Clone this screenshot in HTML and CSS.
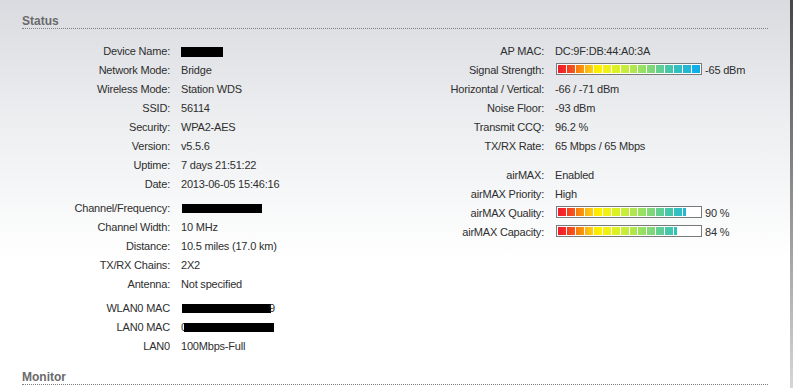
FILE: index.html
```html
<!DOCTYPE html>
<html>
<head>
    <meta charset="utf-8">
    <title>Status</title>
<link rel="stylesheet" href="styles.css">
</head>
<body>
<div class="page">
    <div class="main">
        <h2 class="section-title">Status</h2>

        <div class="status">
            <div class="col left">
                <div class="group">
                    <div class="row"><span class="label">Device Name:</span><span class="value"><span class="redact dev"></span></span></div>
                    <div class="row"><span class="label">Network Mode:</span><span class="value">Bridge</span></div>
                    <div class="row"><span class="label">Wireless Mode:</span><span class="value">Station WDS</span></div>
                    <div class="row"><span class="label">SSID:</span><span class="value">56114</span></div>
                    <div class="row"><span class="label">Security:</span><span class="value">WPA2-AES</span></div>
                    <div class="row"><span class="label">Version:</span><span class="value">v5.5.6</span></div>
                    <div class="row"><span class="label">Uptime:</span><span class="value">7 days 21:51:22</span></div>
                    <div class="row"><span class="label">Date:</span><span class="value">2013-06-05 15:46:16</span></div>
                </div>
                <div class="group">
                    <div class="row"><span class="label">Channel/Frequency:</span><span class="value"><span class="redact chan"></span></span></div>
                    <div class="row"><span class="label">Channel Width:</span><span class="value">10 MHz</span></div>
                    <div class="row"><span class="label">Distance:</span><span class="value">10.5 miles (17.0 km)</span></div>
                    <div class="row"><span class="label">TX/RX Chains:</span><span class="value">2X2</span></div>
                    <div class="row"><span class="label">Antenna:</span><span class="value">Not specified</span></div>
                </div>
                <div class="group">
                    <div class="row"><span class="label">WLAN0 MAC</span><span class="value"><span class="redact wlan"></span><span class="peek">9</span></span></div>
                    <div class="row"><span class="label">LAN0 MAC</span><span class="value">0<span class="redact lan"></span></span></div>
                    <div class="row"><span class="label">LAN0</span><span class="value">100Mbps-Full</span></div>
                </div>
            </div>

            <div class="col right">
                <div class="group">
                    <div class="row"><span class="label">AP MAC:</span><span class="value">DC:9F:DB:44:A0:3A</span></div>
                    <div class="row"><span class="label">Signal Strength:</span>
                        <span class="value meter-wrap">
                            <span class="meter"><span class="meter-fill" style="width:100%"><span class="segs"><i></i><i></i><i></i><i></i><i></i><i></i><i></i><i></i><i></i><i></i><i></i><i></i><i></i><i></i><i></i><i></i></span></span></span>
                            <span>-65 dBm</span>
                        </span>
                    </div>
                    <div class="row"><span class="label">Horizontal / Vertical:</span><span class="value">-66 / -71 dBm</span></div>
                    <div class="row"><span class="label">Noise Floor:</span><span class="value">-93 dBm</span></div>
                    <div class="row"><span class="label">Transmit CCQ:</span><span class="value">96.2 %</span></div>
                    <div class="row"><span class="label">TX/RX Rate:</span><span class="value">65 Mbps / 65 Mbps</span></div>
                </div>
                <div class="group">
                    <div class="row"><span class="label">airMAX:</span><span class="value">Enabled</span></div>
                    <div class="row"><span class="label">airMAX Priority:</span><span class="value">High</span></div>
                    <div class="row"><span class="label">airMAX Quality:</span>
                        <span class="value meter-wrap">
                            <span class="meter"><span class="meter-fill" style="width:90%"><span class="segs"><i></i><i></i><i></i><i></i><i></i><i></i><i></i><i></i><i></i><i></i><i></i><i></i><i></i><i></i><i></i><i></i></span></span></span>
                            <span>90 %</span>
                        </span>
                    </div>
                    <div class="row"><span class="label">airMAX Capacity:</span>
                        <span class="value meter-wrap">
                            <span class="meter"><span class="meter-fill" style="width:84%"><span class="segs"><i></i><i></i><i></i><i></i><i></i><i></i><i></i><i></i><i></i><i></i><i></i><i></i><i></i><i></i><i></i><i></i></span></span></span>
                            <span>84 %</span>
                        </span>
                    </div>
                </div>
            </div>
        </div>

        <h2 class="section-title monitor">Monitor</h2>
    </div>
    <div class="edge"></div>
</div>
</body>
</html>
```

FILE: styles.css
```css
*
{
  margin: 0;
  padding: 0;
  box-sizing: content-box;
}

html, body
{
  height: 100%;
}

body
{
  font-family: "Liberation Sans", Arial, sans-serif;
  font-size: 11px;
  letter-spacing: -0.2px;
  color: #2e2e2e;
  overflow: hidden;
  background: linear-gradient(to bottom, #d9dbe0 0px, #eceef0 120px, #ffffff 260px);
}

div.page
{
  display: flex;
  height: 388px;
}

div.main
{
  flex: 1;
}

div.edge
{
  width: 3px;
  background: linear-gradient(to bottom, #464646, #d6d6d6);
}

/* section headings with dotted rule */
h2.section-title
{
  margin: 14px 22px 0 22px;
  font-size: 12px;
  font-weight: bold;
  line-height: 14px;
  letter-spacing: 0;
  color: #6a6a6a;
  border-bottom: 1px dotted #808080;
}

h2.monitor
{
  margin-top: 15px;
}

div.status
{
  display: flex;
  padding-top: 12px;
}

div.left
{
  width: 378px;
  padding-left: 22px;
}

div.right
{
  flex: 1;
}

div.left .group + .group
{
  margin-top: 5px;
}

div.right .group + .group
{
  margin-top: 10px;
}

div.row
{
  display: grid;
  grid-template-columns: 148px auto;
  column-gap: 11px;
  height: 19px;
  align-items: center;
  white-space: nowrap;
}

div.right .row
{
  grid-template-columns: 144px auto;
}

span.label
{
  text-align: right;
}

/* blacked out values */
span.redact
{
  display: inline-block;
  background: #000;
  vertical-align: middle;
}

span.dev
{
  width: 42px;
  height: 10px;
  margin-top: 2px;
}

span.chan
{
  width: 80px;
  height: 9px;
  margin-left: 1px;
}

span.wlan
{
  width: 89px;
  height: 9px;
  margin-left: 1px;
}

span.peek
{
  margin-left: -2px;
}

span.lan
{
  width: 90px;
  height: 9px;
  margin-left: -3px;
}

/* signal meters */
span.meter-wrap
{
  display: flex;
  align-items: center;
  gap: 3px;
}

span.meter
{
  display: block;
  width: 142px;
  height: 8px;
  padding: 1px;
  margin: -2px 0 0 1px;
  border: 1px solid #7a7a7a;
  background: #fff;
}

span.meter-fill
{
  display: block;
  height: 8px;
  overflow: hidden;
}

span.segs
{
  display: flex;
  gap: 1px;
  width: 142px;
  height: 8px;
}

span.segs i
{
  flex: 1;
  height: 8px;
}

span.segs i:nth-child(1)  { background: linear-gradient(to right, #ee1c2c, #f52e26); }
span.segs i:nth-child(2)  { background: linear-gradient(to right, #f43c20, #f85a18); }
span.segs i:nth-child(3)  { background: linear-gradient(to right, #f9780e, #fb9a0c); }
span.segs i:nth-child(4)  { background: linear-gradient(to right, #fcb412, #fdd00a); }
span.segs i:nth-child(5)  { background: linear-gradient(to right, #fee800, #fff200); }
span.segs i:nth-child(6)  { background: linear-gradient(to right, #f4f010, #eef018); }
span.segs i:nth-child(7)  { background: linear-gradient(to right, #e2f020, #d8f028); }
span.segs i:nth-child(8)  { background: linear-gradient(to right, #ccee34, #c2ec3c); }
span.segs i:nth-child(9)  { background: linear-gradient(to right, #b4e84a, #aae652); }
span.segs i:nth-child(10) { background: linear-gradient(to right, #9ce25e, #92df66); }
span.segs i:nth-child(11) { background: linear-gradient(to right, #84da74, #7ad67e); }
span.segs i:nth-child(12) { background: linear-gradient(to right, #66d08e, #5ccd96); }
span.segs i:nth-child(13) { background: linear-gradient(to right, #48c8a6, #40c6ae); }
span.segs i:nth-child(14) { background: linear-gradient(to right, #34c0bc, #2ebec4); }
span.segs i:nth-child(15) { background: linear-gradient(to right, #24b8d2, #1eb6da); }
span.segs i:nth-child(16) { background: linear-gradient(to right, #14b0e6, #0eaeec); }
```
